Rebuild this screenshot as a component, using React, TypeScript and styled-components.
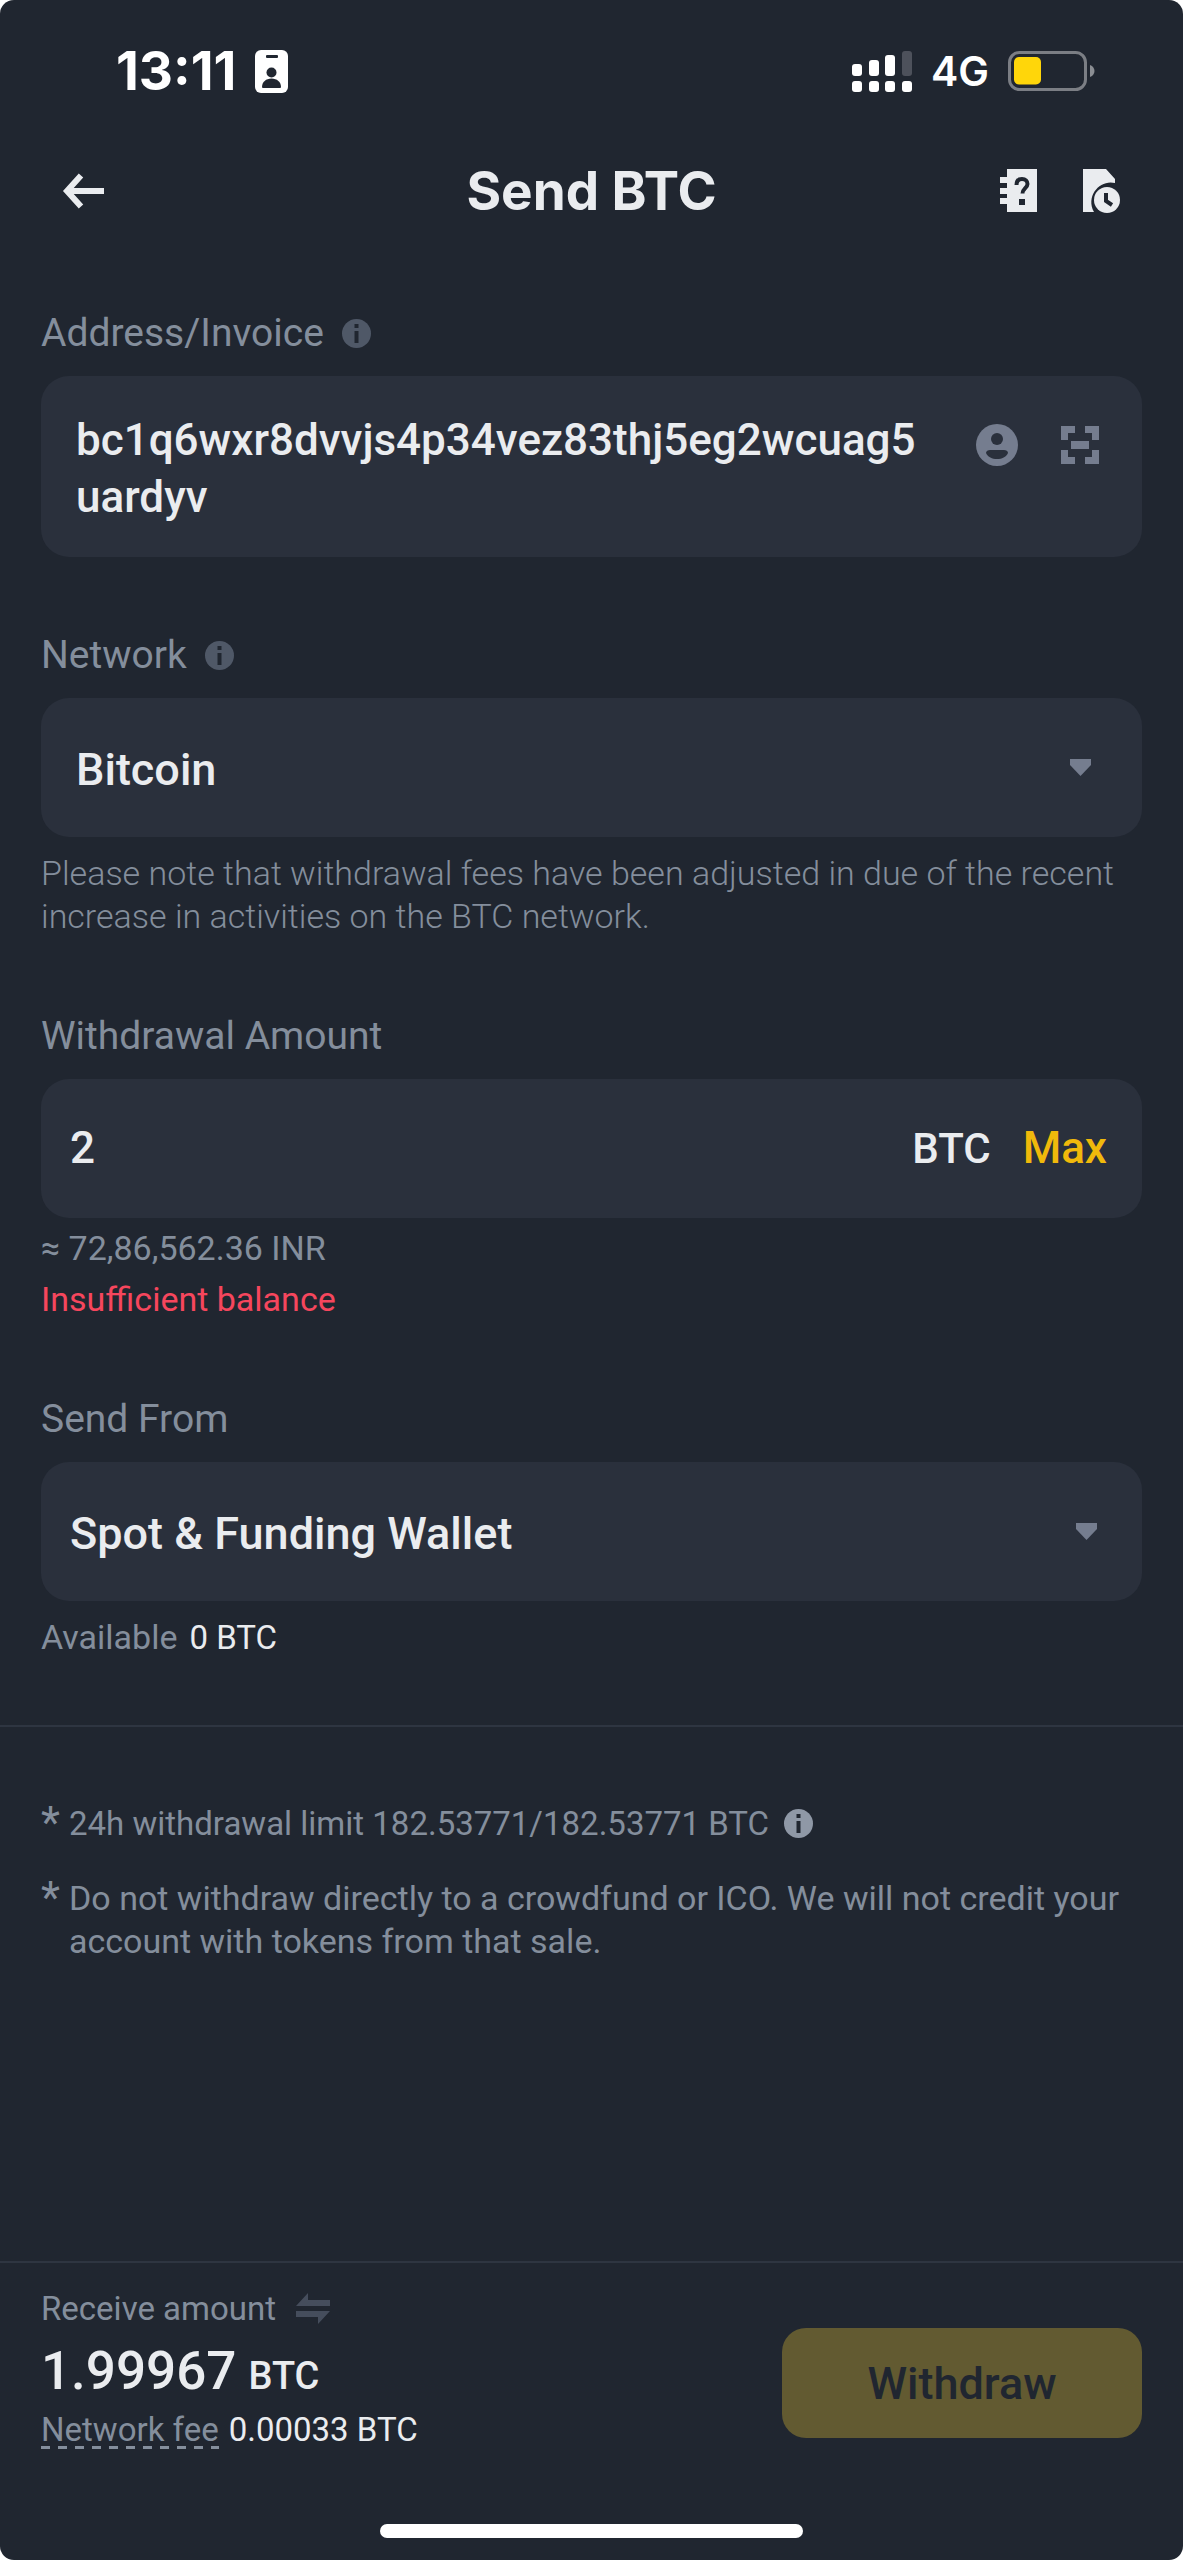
import React, { useState } from "react";
import styled, { createGlobalStyle } from "styled-components";

const color = {
  page: "#202630",
  field: "#2a303c",
  line: "#2e3541",
  text: "#eaecef",
  muted: "#848e9c",
  icon: "#757d8f",
  faint: "#4f5867",
  accent: "#f0b90b",
  error: "#f6465d",
};

const GlobalStyle = createGlobalStyle`
  * { box-sizing: border-box; }
  body {
    margin: 0;
    background: #fff;
    font-family: Roboto, "Noto Sans", "Liberation Sans", sans-serif;
    color: ${color.text};
  }
  button, input, textarea, select {
    margin: 0;
    padding: 0;
    border: 0;
    outline: 0;
    background: none;
    color: inherit;
    font: inherit;
  }
  button { cursor: pointer; }
  svg { display: block; flex: none; }
`;

const Screen = styled.div`
  display: flex;
  flex-direction: column;
  min-height: 100vh;
  background: ${color.page};
  border-radius: 14px;
  overflow: hidden;
`;

const StatusBar = styled.div`
  display: flex;
  justify-content: space-between;
  align-items: center;
  height: 142px;
  padding: 0 88px 0 116px;
  color: #fff;
  font-family: Inter, Roboto, sans-serif;
`;

const StatusGroup = styled.div`
  display: flex;
  align-items: center;
  gap: 19px;
`;

const Clock = styled.span`
  font-size: 53px;
  line-height: 60px;
  font-weight: 700;
`;

const Carrier = styled.span`
  font-size: 41px;
  line-height: 48px;
  font-weight: 600;
`;

const Header = styled.header`
  display: grid;
  grid-template-columns: 1fr auto 1fr;
  align-items: center;
  height: 98px;
  padding: 0 62px;
`;

const Title = styled.h1`
  margin: 0;
  font-family: Inter, Roboto, sans-serif;
  font-size: 53px;
  line-height: 64px;
  font-weight: 700;
`;

const HeaderActions = styled.div`
  display: flex;
  justify-content: flex-end;
  gap: 46px;
`;

const IconButton = styled.button<{ $tone?: string }>`
  display: flex;
  justify-self: start;
  color: ${(p) => p.$tone ?? color.text};
`;

const Form = styled.form`
  display: flex;
  flex-direction: column;
  flex: 1;
`;

const Fields = styled.div`
  display: flex;
  flex-direction: column;
  gap: 74px;
  padding: 69px 41px 66px;
  border-bottom: 2px solid ${color.line};
`;

const Field = styled.div`
  display: flex;
  flex-direction: column;
`;

const LabelRow = styled.div`
  display: flex;
  align-items: center;
  gap: 18px;
  margin-bottom: 19px;
  color: ${color.muted};
  font-size: 39px;
  line-height: 48px;
`;

const FieldBox = styled.div<{ $inset: number }>`
  display: flex;
  align-items: center;
  min-height: 139px;
  padding: 0 ${(p) => p.$inset}px;
  border-radius: 28px;
  background: ${color.field};
  font-size: 44px;
  line-height: 57px;
  font-weight: 500;
`;

const AddressBox = styled(FieldBox)`
  align-items: flex-start;
  gap: 55px;
  padding-top: 36px;
  padding-bottom: 31px;
`;

const AddressInput = styled.textarea`
  flex: 1;
  min-width: 0;
  height: 114px;
  resize: none;
  overflow: hidden;
  word-break: break-all;
`;

const BoxActions = styled.div`
  display: flex;
  align-items: center;
  gap: 43px;
  padding: 12px 8px 0 0;
`;

const SelectWrap = styled.div`
  display: grid;
  flex: 1;
  align-items: center;
`;

const Select = styled.select`
  grid-area: 1 / 1;
  width: 100%;
  height: 139px;
  padding-top: 3px;
  appearance: none;
  font-size: 45px;
`;

const CaretIcon = styled.svg`
  grid-area: 1 / 1;
  justify-self: end;
  margin-right: 16px;
  color: ${color.icon};
  pointer-events: none;
`;

const AmountInput = styled.input`
  flex: 1;
  min-width: 0;
`;

const Unit = styled.span`
  margin-right: 32px;
  font-size: 42px;
`;

const MaxButton = styled.button`
  margin-right: 6px;
  color: ${color.accent};
`;

const Hint = styled.p<{ $gap: number; $tone?: string; $weight?: number }>`
  margin: ${(p) => p.$gap}px 0 0;
  color: ${(p) => p.$tone ?? color.muted};
  font-size: 34px;
  line-height: 43px;
  font-weight: ${(p) => p.$weight ?? 400};
`;

const Value = styled.span`
  color: ${color.text};
  font-size: 33px;
`;

const Available = styled(Hint)`
  display: flex;
  gap: 12px;
`;

const Notes = styled.ul`
  display: flex;
  flex-direction: column;
  gap: 32px;
  margin: 0;
  padding: 75px 60px 75px 41px;
  list-style: none;
  color: ${color.muted};
  font-size: 34px;
  line-height: 43px;
`;

const Note = styled.li`
  display: flex;
`;

const Star = styled.span`
  flex: none;
  width: 28px;
  font-size: 44px;
`;

const LimitText = styled.span`
  display: flex;
  align-items: center;
  gap: 15px;
  font-size: 33px;
`;

const Footer = styled.footer`
  display: flex;
  justify-content: space-between;
  align-items: flex-end;
  margin-top: auto;
  padding: 24px 41px 73px;
  border-top: 2px solid ${color.line};
  color: ${color.muted};
  font-size: 33px;
  line-height: 43px;
`;

const ReceiveRow = styled.div`
  display: flex;
  align-items: center;
  gap: 20px;
`;

const ReceiveAmount = styled.div`
  display: flex;
  align-items: baseline;
  gap: 12px;
  height: 70px;
  margin: 6px 0 2px;
  color: ${color.text};
  font-size: 53px;
  line-height: 70px;
  font-weight: 500;
`;

const ReceiveUnit = styled.span`
  font-size: 38px;
  line-height: 43px;
`;

const FeeRow = styled.div`
  display: flex;
  gap: 10px;
`;

const FeeButton = styled.button`
  height: 41px;
  line-height: 43px;
  background: repeating-linear-gradient(90deg, ${color.muted} 0 9px, transparent 9px 17px) left bottom / 100% 3px no-repeat;
`;

const Submit = styled.button`
  width: 360px;
  height: 110px;
  margin-bottom: 13px;
  border-radius: 24px;
  background: #625a31;
  color: ${color.page};
  font-size: 45px;
  font-weight: 500;
`;

const HomeBar = styled.div`
  width: 423px;
  height: 14px;
  margin: 0 auto 22px;
  border-radius: 7px;
  background: #fff;
`;

const BadgeIcon = () => (
  <svg width="33" height="43" viewBox="0 0 33 43" aria-hidden="true">
    <rect width="33" height="43" rx="6" fill="#fff" />
    <rect x="11" y="5" width="12" height="3" rx="1" fill={color.page} />
    <circle cx="16.500" cy="22.500" r="5" fill={color.page} />
    <path d="M7 37c0-5 4-8.500 9.500-8.500S26 32 26 37q0 1-1 1H8q-1 0-1-1Z" fill={color.page} />
  </svg>
);

const SignalIcon = () => (
  <svg width="60" height="41" viewBox="0 0 60 41" fill="#fff" aria-hidden="true">
    <rect x="0" y="13" width="10" height="12" rx="3" />
    <rect x="17" y="9" width="10" height="16" rx="3" />
    <rect x="33" y="4" width="10" height="21" rx="3" />
    <rect x="50" y="0" width="10" height="25" rx="3" fill="#4d515b" />
    <rect x="0" y="30" width="10" height="11" rx="3" />
    <rect x="17" y="30" width="10" height="11" rx="3" />
    <rect x="33" y="30" width="10" height="11" rx="3" />
    <rect x="50" y="30" width="10" height="11" rx="3" />
  </svg>
);

const BatteryIcon = () => (
  <svg width="87" height="40" viewBox="0 0 87 40" aria-hidden="true">
    <rect x="1.500" y="1.500" width="76" height="37" rx="10" fill="none" stroke="#7b7e84" strokeWidth="3" />
    <rect x="6" y="6" width="27" height="27.500" rx="5" fill="#ffd60a" />
    <path d="M82 14c6 2 6 10 0 12Z" fill="#8b8e93" />
  </svg>
);

const BackIcon = () => (
  <svg width="44" height="36" viewBox="0 0 44 36" fill="none" stroke="currentColor" strokeWidth="6" aria-hidden="true">
    <path d="M42 18H6M19 2.500 5 18l14 15.500" />
  </svg>
);

const HelpBookIcon = () => (
  <svg width="37" height="43" viewBox="0 0 37 43" aria-hidden="true">
    <path fill="currentColor" d="M7 0h30v43H7v-8H0v-6h7v-4H0v-6h7v-5H0V8h7Z" />
    <path d="M16.500 16c0-4 2-6 5.500-6s5.500 2 5.500 5c0 4-5 4.500-5 9.500" fill="none" stroke={color.page} strokeWidth="4" />
    <rect x="19" y="30" width="6" height="6" fill={color.page} />
  </svg>
);

const HistoryDocIcon = () => (
  <svg width="38" height="44" viewBox="0 0 38 44" aria-hidden="true">
    <path fill="currentColor" d="M0 0h23l9 10v4C18 10 2 26 11 43H0Z" />
    <circle cx="24" cy="31" r="13" fill="currentColor" />
    <path d="M23 24v8l6 4" fill="none" stroke={color.page} strokeWidth="4" />
  </svg>
);

const InfoIcon = ({ tone, hole = color.page }: { tone: string; hole?: string }) => (
  <svg width="29" height="29" viewBox="0 0 29 29" aria-hidden="true">
    <circle cx="14.500" cy="14.500" r="14.500" fill={tone} />
    <rect x="12.500" y="5" width="4" height="4" fill={hole} />
    <rect x="12.500" y="12" width="4" height="12" fill={hole} />
  </svg>
);

const ContactIcon = () => (
  <svg width="42" height="42" viewBox="0 0 42 42" aria-hidden="true">
    <circle cx="21" cy="21" r="21" fill="currentColor" />
    <circle cx="21" cy="15" r="6" fill={color.field} />
    <path d="M10 29c0-2 2-3 4-3h14c2 0 4 1 4 3-2 4-6 6-11 6s-9-2-11-6Z" fill={color.field} />
  </svg>
);

const ScanIcon = () => (
  <svg width="38" height="38" viewBox="0 0 38 38" fill="currentColor" aria-hidden="true">
    <path d="M0 0h14v7H7v7H0ZM24 0h14v14h-7V7h-7ZM0 24h7v7h7v7H0ZM31 24h7v14H24v-7h7ZM10 15h18v8H10Z" />
  </svg>
);

const Caret = () => (
  <CaretIcon width="21" height="17" viewBox="0 0 21 17" aria-hidden="true">
    <path fill="currentColor" d="M0 0h21v6L10.500 17 0 6Z" />
  </CaretIcon>
);

const SwapIcon = () => (
  <svg width="34" height="31" viewBox="0 0 34 31" fill="#454d5c" aria-hidden="true">
    <path d="M12 0v7h22v6H0ZM22 31v-7H0v-6h34Z" />
  </svg>
);

export default function App() {
  const [address, setAddress] = useState("bc1q6wxr8dvvjs4p34vez83thj5eg2wcuag5uardyv");
  const [amount, setAmount] = useState("2");

  return (
    <>
      <GlobalStyle />
      <Screen>
        <StatusBar>
          <StatusGroup>
            <Clock>13:11</Clock>
            <BadgeIcon />
          </StatusGroup>
          <StatusGroup>
            <SignalIcon />
            <Carrier>4G</Carrier>
            <BatteryIcon />
          </StatusGroup>
        </StatusBar>

        <Header>
          <IconButton type="button" aria-label="Back"><BackIcon /></IconButton>
          <Title>Send BTC</Title>
          <HeaderActions>
            <IconButton type="button" aria-label="Help"><HelpBookIcon /></IconButton>
            <IconButton type="button" aria-label="History"><HistoryDocIcon /></IconButton>
          </HeaderActions>
        </Header>

        <Form onSubmit={(e) => e.preventDefault()}>
          <Fields>
            <Field>
              <LabelRow>
                <label htmlFor="address">Address/Invoice</label>
                <InfoIcon tone={color.faint} />
              </LabelRow>
              <AddressBox $inset={35}>
                <AddressInput id="address" value={address} onChange={(e) => setAddress(e.target.value)} />
                <BoxActions>
                  <IconButton type="button" aria-label="Address book" $tone={color.icon}><ContactIcon /></IconButton>
                  <IconButton type="button" aria-label="Scan" $tone={color.icon}><ScanIcon /></IconButton>
                </BoxActions>
              </AddressBox>
            </Field>

            <Field>
              <LabelRow>
                <label htmlFor="network">Network</label>
                <InfoIcon tone={color.faint} />
              </LabelRow>
              <FieldBox $inset={35}>
                <SelectWrap>
                  <Select id="network">
                    <option>Bitcoin</option>
                  </Select>
                  <Caret />
                </SelectWrap>
              </FieldBox>
              <Hint $gap={15} $weight={300}>
                Please note that withdrawal fees have been adjusted in due of the recent increase in
                activities on the BTC network.
              </Hint>
            </Field>

            <Field>
              <LabelRow>
                <label htmlFor="amount">Withdrawal Amount</label>
              </LabelRow>
              <FieldBox $inset={29}>
                <AmountInput id="amount" value={amount} onChange={(e) => setAmount(e.target.value)} />
                <Unit>BTC</Unit>
                <MaxButton type="button">Max</MaxButton>
              </FieldBox>
              <Hint $gap={9}>≈ 72,86,562.36 INR</Hint>
              <Hint $gap={8} $tone={color.error}>Insufficient balance</Hint>
            </Field>

            <Field>
              <LabelRow>
                <label htmlFor="wallet">Send From</label>
              </LabelRow>
              <FieldBox $inset={29}>
                <SelectWrap>
                  <Select id="wallet">
                    <option>Spot &amp; Funding Wallet</option>
                  </Select>
                  <Caret />
                </SelectWrap>
              </FieldBox>
              <Available $gap={15}>
                Available <Value>0 BTC</Value>
              </Available>
            </Field>
          </Fields>

          <Notes>
            <Note>
              <Star>*</Star>
              <LimitText>
                24h withdrawal limit 182.53771/182.53771 BTC
                <InfoIcon tone="#8f98a6" />
              </LimitText>
            </Note>
            <Note>
              <Star>*</Star>
              <span>
                Do not withdraw directly to a crowdfund or ICO. We will not credit your account with
                tokens from that sale.
              </span>
            </Note>
          </Notes>

          <Footer>
            <div>
              <ReceiveRow>
                Receive amount
                <SwapIcon />
              </ReceiveRow>
              <ReceiveAmount>
                <span>1.99967</span>
                <ReceiveUnit>BTC</ReceiveUnit>
              </ReceiveAmount>
              <FeeRow>
                <FeeButton type="button">Network fee</FeeButton>
                <Value>0.00033 BTC</Value>
              </FeeRow>
            </div>
            <Submit type="submit">Withdraw</Submit>
          </Footer>
        </Form>
        <HomeBar />
      </Screen>
    </>
  );
}
